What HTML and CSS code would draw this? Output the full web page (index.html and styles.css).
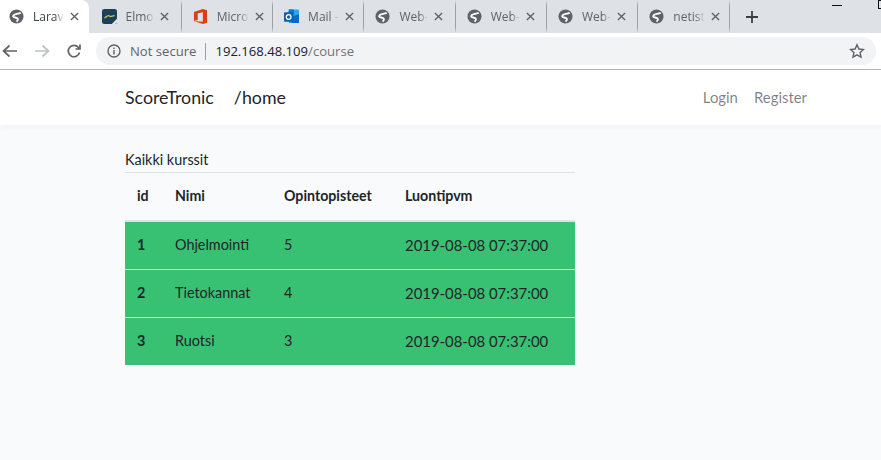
FILE: index.html
```html
<!DOCTYPE html>
<html lang="en">
<head>
  <meta charset="UTF-8">
  <meta name="viewport" content="width=device-width, initial-scale=1.0">
  <title>ScoreTronic</title>
  <link rel="stylesheet" href="styles.css">
</head>
<body>
  <div class="tabstrip">
    <div class="tab tab-active">
      <svg class="favicon" viewBox="0 0 16 16"><use href="#globe"/></svg>
      <span class="tab-title">Larav</span>
      <svg class="tab-close" viewBox="0 0 10 10"><path d="M1 1l8 8M9 1l-8 8"/></svg>
    </div>
    <div class="tab">
      <svg class="favicon" viewBox="0 0 16 16">
        <rect width="16" height="16" rx="2.500" fill="#1d4059"/>
        <path d="M2.500 9.500c2-.5 3-2.500 4.500-2.500s1 1.500 2.500 1 2-1 4-1" fill="none" stroke="#c9c45a" stroke-width="1.300"/>
        <path d="M10.500 16l5.500-5.500V14l-2 2z" fill="#e8e8e8"/>
      </svg>
      <span class="tab-title">Elmo</span>
      <svg class="tab-close" viewBox="0 0 10 10"><path d="M1 1l8 8M9 1l-8 8"/></svg>
    </div>
    <div class="tab">
      <svg class="favicon" viewBox="0 0 16 16">
        <path d="M1 3.300L10.500 0 15 1.300v13.400L10.500 16 1 12.700l9.500 1V3.400L5 4.600v7.100l-4 1z" fill="#dc3e15"/>
      </svg>
      <span class="tab-title">Micro</span>
      <svg class="tab-close" viewBox="0 0 10 10"><path d="M1 1l8 8M9 1l-8 8"/></svg>
    </div>
    <div class="tab">
      <svg class="favicon" viewBox="0 0 16 16">
        <rect x="5" y="0.500" width="11" height="14.500" rx="1" fill="#28a8ea"/>
        <rect x="5" y="0.500" width="5.500" height="5" fill="#0078d4"/>
        <path d="M8 8l8-2.500V14a1 1 0 0 1-1 1H8z" fill="#0a6cc4"/>
        <rect x="0" y="3.500" width="10" height="10" rx="1" fill="#0f5fb0"/>
        <circle cx="5" cy="8.500" r="2.500" fill="none" stroke="#fff" stroke-width="1.400"/>
      </svg>
      <span class="tab-title">Mail -</span>
      <svg class="tab-close" viewBox="0 0 10 10"><path d="M1 1l8 8M9 1l-8 8"/></svg>
    </div>
    <div class="tab">
      <svg class="favicon" viewBox="0 0 16 16"><use href="#globe"/></svg>
      <span class="tab-title">Web-</span>
      <svg class="tab-close" viewBox="0 0 10 10"><path d="M1 1l8 8M9 1l-8 8"/></svg>
    </div>
    <div class="tab">
      <svg class="favicon" viewBox="0 0 16 16"><use href="#globe"/></svg>
      <span class="tab-title">Web-</span>
      <svg class="tab-close" viewBox="0 0 10 10"><path d="M1 1l8 8M9 1l-8 8"/></svg>
    </div>
    <div class="tab">
      <svg class="favicon" viewBox="0 0 16 16"><use href="#globe"/></svg>
      <span class="tab-title">Web-</span>
      <svg class="tab-close" viewBox="0 0 10 10"><path d="M1 1l8 8M9 1l-8 8"/></svg>
    </div>
    <div class="tab">
      <svg class="favicon" viewBox="0 0 16 16"><use href="#globe"/></svg>
      <span class="tab-title">netist</span>
      <svg class="tab-close" viewBox="0 0 10 10"><path d="M1 1l8 8M9 1l-8 8"/></svg>
    </div>
    <svg class="new-tab" viewBox="0 0 12 12"><path d="M6 0v12M0 6h12"/></svg>
    <div class="win-min"></div>
    <div class="win-max"></div>
  </div>

  <div class="toolbar">
    <svg class="nav-icon" viewBox="0 0 16 16"><path d="M15 8H1.500M7.500 2.500L1.500 8l6 5.500"/></svg>
    <svg class="nav-icon nav-disabled" viewBox="0 0 16 16"><path d="M1 8h13.500M8.500 2.500l6 5.500-6 5.500"/></svg>
    <svg class="nav-icon" viewBox="0 0 16 16"><path d="M13.500 9.500a5.700 5.700 0 1 1-1.200-5.200L14 6M14 1.500V6H9.500"/></svg>
    <div class="omnibox">
      <svg class="info-icon" viewBox="0 0 14 14">
        <circle cx="7" cy="7" r="6"/>
        <path d="M7 6v4.500M7 3.400v1.500"/>
      </svg>
      <span class="secure">Not secure</span>
      <span class="omni-sep"></span>
      <span class="url">192.168.48.109<span class="url-path">/course</span></span>
      <svg class="star-icon" viewBox="0 0 16 16"><path d="M8 1.800l1.900 4.200 4.600.5-3.400 3.100.9 4.500L8 11.800l-4 2.300.9-4.500-3.400-3.100 4.600-.5z"/></svg>
    </div>
  </div>

  <nav class="navbar">
    <div class="nav-left">
      <a class="brand">ScoreTronic</a>
      <a class="brand">/home</a>
    </div>
    <div class="nav-right">
      <a class="nav-link">Login</a>
      <a class="nav-link">Register</a>
    </div>
  </nav>

  <main class="content">
    <div class="card-title">Kaikki kurssit</div>
    <table class="course-table">
      <thead>
        <tr>
          <th class="col-id">id</th>
          <th class="col-name">Nimi</th>
          <th class="col-points">Opintopisteet</th>
          <th>Luontipvm</th>
        </tr>
      </thead>
      <tbody>
        <tr>
          <th>1</th>
          <td>Ohjelmointi</td>
          <td>5</td>
          <td class="date">2019-08-08 07:37:00</td>
        </tr>
        <tr>
          <th>2</th>
          <td>Tietokannat</td>
          <td>4</td>
          <td class="date">2019-08-08 07:37:00</td>
        </tr>
        <tr>
          <th>3</th>
          <td>Ruotsi</td>
          <td>3</td>
          <td class="date">2019-08-08 07:37:00</td>
        </tr>
      </tbody>
    </table>
  </main>

  <svg class="icon-defs" width="0" height="0">
    <defs>
      <g id="globe">
        <circle cx="8" cy="8" r="7.500" fill="#5f6368"/>
        <path d="M12.500 4C9.500 6 5.500 4.500 4.500 7.500 4 9.500 8.500 8.500 9.500 10.500 10 12 8.500 13 8 13.500" fill="none" stroke="#fff" stroke-width="2"/>
      </g>
    </defs>
  </svg>
</body>
</html>
```

FILE: styles.css
```css
body {
  font-family: "Lato", "Noto Sans", sans-serif;
  background-color: #f8fafc;
  color: #212529;
  margin: 0;
  font-size: 14.4px;
}

/* browser chrome */
.tabstrip {
  position: relative;
  display: flex;
  align-items: center;
  height: 33px;
  background-color: #dee1e6;
  font-family: "Open Sans", sans-serif;
  font-size: 12px;
  color: #5f6368;
}
.tab {
  display: flex;
  align-items: center;
  box-sizing: border-box;
  width: 91.300px;
  height: 33px;
  padding: 0 12px 0 11px;
  border-right: 1px solid #9aa0a6;
  border-top: 6px solid #dee1e6;
  border-bottom: 6px solid #dee1e6;
}
.tab-active {
  width: 89px;
  margin-right: 1.500px;
  padding-left: 9px;
  border: none;
  background-color: #fff;
  border-top-right-radius: 8px;
  color: #3c4043;
}
.favicon {
  width: 15px;
  height: 15px;
  flex: none;
}
.tab-title {
  flex: 1;
  margin-left: 9px;
  white-space: nowrap;
  -webkit-mask-image: linear-gradient(to right, #000 70%, transparent);
  mask-image: linear-gradient(to right, #000 70%, transparent);
}
.tab-close {
  width: 9px;
  height: 9px;
  flex: none;
  margin-left: 6px;
  fill: none;
  stroke: #5f6368;
  stroke-width: 1.500;
}
.new-tab {
  width: 12px;
  height: 12px;
  margin-left: 16px;
  fill: none;
  stroke: #3c4043;
  stroke-width: 1.800;
}
.win-min {
  position: absolute;
  top: 5px;
  left: 832px;
  width: 10px;
  height: 1px;
  background-color: #111;
}
.win-max {
  position: absolute;
  top: 0;
  left: 878px;
  width: 8px;
  height: 9px;
  box-sizing: border-box;
  border: 1px solid #111;
}

.toolbar {
  display: flex;
  align-items: center;
  height: 36px;
  background-color: #fff;
  border-bottom: 1px solid #b4b4b4;
  padding-left: 2px;
}
.nav-icon {
  width: 16px;
  height: 16px;
  margin-right: 16px;
  flex: none;
  fill: none;
  stroke: #5f6368;
  stroke-width: 1.700;
}
.nav-disabled {
  stroke: #bdc1c6;
}
.omnibox {
  display: flex;
  align-items: center;
  height: 28px;
  width: 780px;
  margin-left: -2px;
  padding: 0 11px;
  box-sizing: border-box;
  background-color: #f1f3f4;
  border-radius: 14px;
  font-family: "Open Sans", sans-serif;
  font-size: 13.100px;
  color: #202124;
}
.info-icon {
  width: 14px;
  height: 14px;
  flex: none;
  fill: none;
  stroke: #5f6368;
  stroke-width: 1.400;
}
.secure {
  margin-left: 9px;
  color: #5f6368;
}
.omni-sep {
  width: 1px;
  height: 17px;
  margin: 0 9px;
  background-color: #9aa0a6;
}
.url-path {
  color: #6f7377;
}
.star-icon {
  width: 16px;
  height: 16px;
  margin-left: auto;
  fill: none;
  stroke: #5f6368;
  stroke-width: 1.400;
}

/* page */
.navbar {
  display: flex;
  justify-content: space-between;
  align-items: center;
  box-sizing: border-box;
  height: 55px;
  padding: 0 74px 2px 125px;
  background-color: #fff;
  box-shadow: 0 2px 4px rgba(0, 0, 0, 0.04);
}
.nav-left {
  display: flex;
  gap: 20px;
}
.brand {
  font-size: 17.800px;
  color: #212529;
}
.nav-right {
  display: flex;
  gap: 16px;
}
.nav-link {
  font-size: 14.900px;
  color: rgba(0, 0, 0, 0.5);
}
.content {
  width: 450px;
  margin-left: 125px;
  padding-top: 26px;
}
.card-title {
  padding-bottom: 3px;
  line-height: 18px;
}
.course-table {
  width: 450px;
  border-collapse: separate;
  border-spacing: 0;
  table-layout: fixed;
}
.course-table th,
.course-table td {
  height: 48px;
  padding: 0 12px 2px;
  box-sizing: border-box;
  text-align: left;
  border-top: 1px solid #dee2e6;
}
.course-table thead th {
  height: 50px;
  font-size: 14.200px;
  border-bottom: 2px solid #dee2e6;
}
.course-table tbody tr {
  background-color: #38c172;
}
.course-table tbody tr:first-child th,
.course-table tbody tr:first-child td {
  height: 47px;
  border-top: none;
}
.date {
  font-size: 14.900px;
}
.col-id {
  width: 38px;
}
.col-name {
  width: 109px;
}
.col-points {
  width: 121px;
}
.icon-defs {
  position: absolute;
}
```
